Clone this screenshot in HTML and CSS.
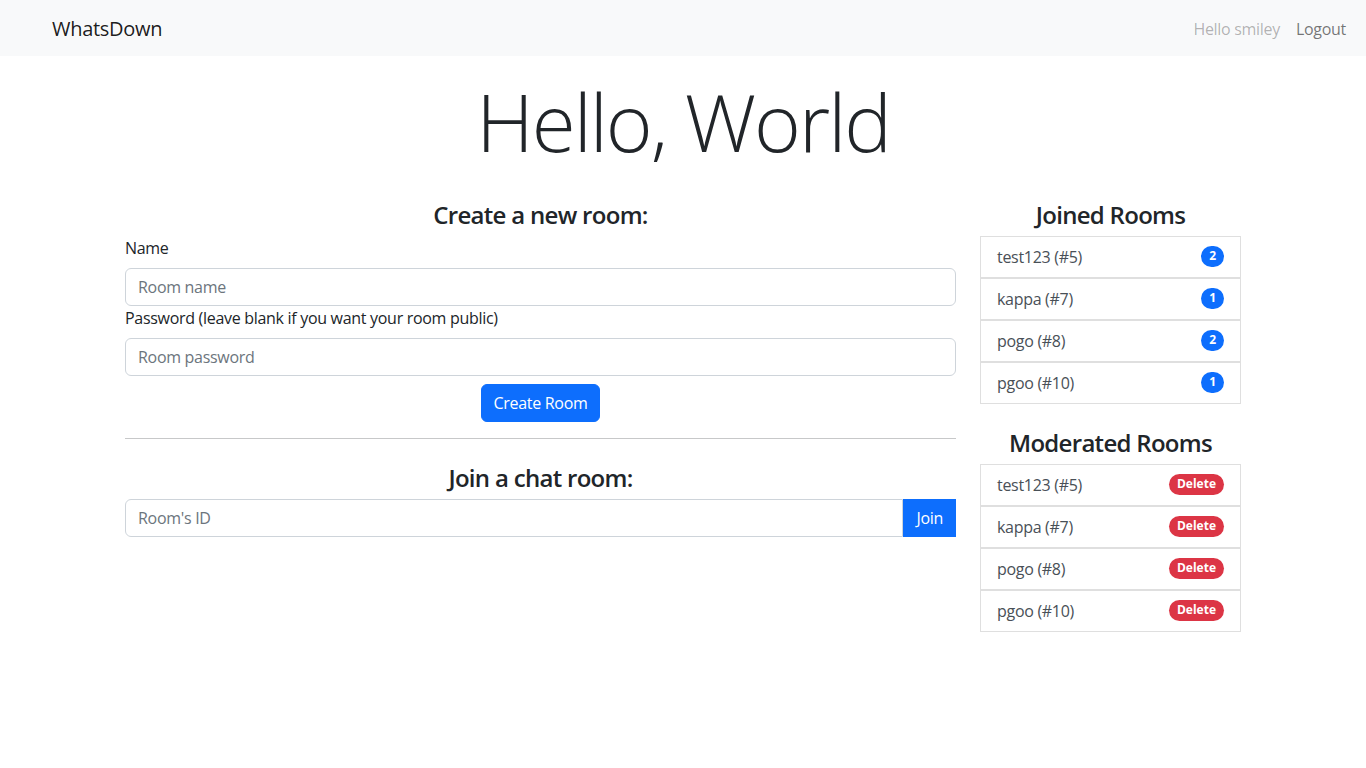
FILE: index.html
```html
<!DOCTYPE html>
<html lang="en">
<head>
<meta charset="utf-8">
<title>WhatsDown</title>
<link rel="stylesheet" href="styles.css">
</head>
<body>
<nav class="navbar">
  <a class="brand" href="#">WhatsDown</a>
  <ul class="nav-links">
    <li><span class="nav-link disabled">Hello smiley</span></li>
    <li><a class="nav-link" href="#">Logout</a></li>
  </ul>
</nav>

<main class="container">
  <h1 class="display">Hello, World</h1>
  <div class="row">
    <section class="col-main">
      <h4 class="section-title">Create a new room:</h4>
      <form class="create-form">
        <label class="form-label" for="room-name">Name</label>
        <input class="form-control" id="room-name" type="text" placeholder="Room name">
        <label class="form-label" for="room-pass">Password (leave blank if you want your room public)</label>
        <input class="form-control" id="room-pass" type="password" placeholder="Room password">
        <div class="center">
          <button class="btn btn-primary create-btn" type="button">Create Room</button>
        </div>
      </form>
      <hr class="divider">
      <h4 class="section-title join-title">Join a chat room:</h4>
      <div class="input-group">
        <input class="form-control" type="text" placeholder="Room's ID">
        <button class="btn btn-primary join-btn" type="button">Join</button>
      </div>
    </section>
    <aside class="col-side">
      <h4 class="section-title">Joined Rooms</h4>
      <ul class="list-group">
        <li class="list-item"><span>test123 (#5)</span><span class="badge badge-primary">2</span></li>
        <li class="list-item"><span>kappa (#7)</span><span class="badge badge-primary">1</span></li>
        <li class="list-item"><span>pogo (#8)</span><span class="badge badge-primary">2</span></li>
        <li class="list-item"><span>pgoo (#10)</span><span class="badge badge-primary">1</span></li>
      </ul>
      <h4 class="section-title mod-title">Moderated Rooms</h4>
      <ul class="list-group">
        <li class="list-item"><span>test123 (#5)</span><span class="badge badge-danger">Delete</span></li>
        <li class="list-item"><span>kappa (#7)</span><span class="badge badge-danger">Delete</span></li>
        <li class="list-item"><span>pogo (#8)</span><span class="badge badge-danger">Delete</span></li>
        <li class="list-item"><span>pgoo (#10)</span><span class="badge badge-danger">Delete</span></li>
      </ul>
    </aside>
  </div>
</main>
</body>
</html>
```

FILE: styles.css
```css
* { box-sizing: border-box; }

body {
  margin: 0;
  font-family: "Open Sans", "Noto Sans", "Liberation Sans", sans-serif;
  font-size: 16px;
  line-height: 1.5;
  letter-spacing: -0.3px;
  color: #212529;
  background: #fff;
}

.navbar {
  display: flex;
  align-items: center;
  justify-content: space-between;
  height: 56px;
  padding: 9px 12px 7px 52px;
  background: #f8f9fa;
}

.brand {
  font-size: 20px;
  line-height: 30px;
  padding: 5px 0;
  color: rgba(0, 0, 0, 0.9);
  text-decoration: none;
}

.nav-links {
  display: flex;
  list-style: none;
  margin: 0;
  padding: 0;
}

.nav-link {
  display: block;
  padding: 8px;
  color: rgba(0, 0, 0, 0.55);
  text-decoration: none;
}

.nav-link.disabled { color: rgba(0, 0, 0, 0.3); }

.container {
  max-width: 1140px;
  margin: 0 auto;
  padding: 0 12px;
}

.display {
  margin: 17px 0 31px;
  font-size: 80px;
  font-weight: 300;
  line-height: 1.2;
  letter-spacing: -2px;
  text-align: center;
}

.row {
  display: flex;
  margin: 0 -12px;
}

.col-main { width: 75%; padding: 0 12px; }
.col-side { width: 25%; padding: 0 12px; }

.section-title {
  margin: 0 0 6px;
  padding-top: 1px;
  font-size: 24px;
  font-weight: 600;
  line-height: 1.2;
  letter-spacing: -0.7px;
  text-align: center;
}

.join-title { margin-top: 24px; }
.mod-title { margin-top: 24px; }

.form-label {
  display: block;
  margin-bottom: 8px;
}

.form-control {
  display: block;
  width: 100%;
  height: 38px;
  padding: 6px 12px;
  font: inherit;
  font-size: 16px;
  line-height: 1.5;
  letter-spacing: -0.3px;
  color: #212529;
  background: #fff;
  border: 1px solid #ced4da;
  border-radius: 6px;
}

.form-control::placeholder { color: #6c757d; }

.center { text-align: center; margin-top: 8px; }

.btn {
  display: inline-block;
  padding: 6px 12px;
  font: inherit;
  font-size: 16px;
  line-height: 1.5;
  letter-spacing: -0.3px;
  border: 1px solid transparent;
  border-radius: 6px;
  cursor: pointer;
}

.btn-primary {
  color: #fff;
  background: #0d6efd;
  border-color: #0d6efd;
}

.divider {
  margin: 16px 0;
  border: 0;
  border-top: 1px solid rgba(33, 37, 41, 0.25);
}

.input-group {
  display: flex;
}

.input-group .form-control {
  flex: 1;
  border-top-right-radius: 0;
  border-bottom-right-radius: 0;
}

.join-btn {
  border-radius: 0;
  height: 38px;
}

.list-group {
  list-style: none;
  margin: 0;
  padding: 0;
}

.list-item {
  display: flex;
  align-items: center;
  justify-content: space-between;
  padding: 8px 16px;
  color: #495057;
  border: 1px solid rgba(0, 0, 0, 0.125);
}

.badge {
  display: inline-block;
  padding: 4px 8px 5px;
  font-size: 12px;
  font-weight: 700;
  line-height: 1;
  letter-spacing: 0;
  color: #fff;
  border-radius: 50rem;
}

.badge-primary { background: #0d6efd; }
.badge-danger { background: #dc3545; }
```
